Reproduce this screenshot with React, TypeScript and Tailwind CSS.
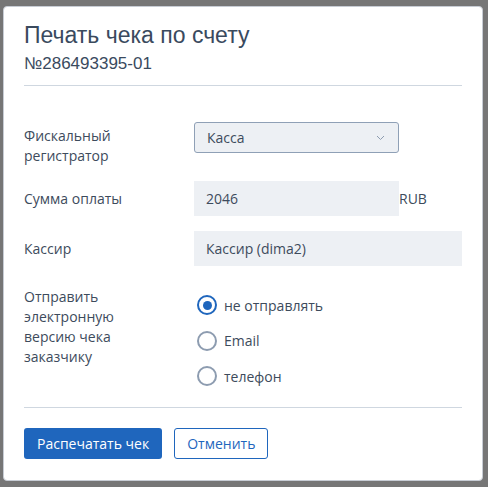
import { useState } from 'react';

const label = 'text-[14px] leading-[20px] text-[#3d4b5c]';
const body = { fontFamily: '"Open Sans", "Noto Sans", sans-serif' };

function Radio({ checked, text, onClick }: { checked: boolean; text: string; onClick: () => void }) {
  return (
    <div className="flex h-[20px] cursor-pointer items-center gap-[7px]" onClick={onClick}>
      <span
        className={`flex h-[20px] w-[20px] items-center justify-center rounded-full border-[2px] ${
          checked ? 'border-[#1f66bd]' : 'border-[#8d9cb0]'
        }`}
      >
        {checked && <span className="h-[9px] w-[9px] rounded-full bg-[#1f66bd]" />}
      </span>
      <span className="text-[14px] text-[#3d4b5c]">{text}</span>
    </div>
  );
}

export default function App() {
  const [send, setSend] = useState('none');

  return (
    <div className="h-[487px] w-[488px] bg-[#767676] pl-[3px] pt-[6px]">
      <div className="flex h-[475px] w-[480px] flex-col rounded-[4px] border border-[#c7ccd4] bg-white px-[20px]" style={body}>
        <div className="pt-[13px]" style={{ fontFamily: '"Liberation Sans", Arial, sans-serif' }}>
          <h1 className="text-[23px] leading-[30px] text-[#3a4a5e]">Печать чека по счету</h1>
          <div className="mt-[3px] text-[17px] leading-[22px] text-[#3a4a5e]">№286493395-01</div>
        </div>
        <div className="mt-[10px] h-px bg-[#cfd7e0]" />

        <div className="mt-[36px] grid grid-cols-[170px_1fr] gap-y-[15px]">
          <div className={`${label} mt-[4px]`}>Фискальный<br />регистратор</div>
          <div>
            <div className="flex h-[31px] w-[205px] items-center justify-between rounded-[3px] border border-[#8fa0b6] bg-[#edf0f4] pl-[12px] pr-[13px]">
              <span className="text-[14px] text-[#3d4b5c]">Касса</span>
              <svg width="9" height="6" viewBox="0 0 9 6" fill="none">
                <path d="M1 1l3.5 3.5L8 1" stroke="#8d9cb0" strokeWidth="1" />
              </svg>
            </div>
          </div>

          <div className={`${label} self-center`}>Сумма оплаты</div>
          <div className="flex items-center">
            <div className="flex h-[35px] w-[205px] items-center bg-[#edf0f4] pl-[12px] text-[14px] text-[#3d4b5c]">2046</div>
            <span className="text-[14px] text-[#3d4b5c]">RUB</span>
          </div>

          <div className={`${label} self-center`}>Кассир</div>
          <div className="flex h-[35px] w-[268px] items-center bg-[#edf0f4] pl-[12px] text-[14px] text-[#3d4b5c]">
            Кассир (dima2)
          </div>

          <div className={`${label} mt-[6px]`}>
            Отправить<br />электронную<br />версию чека<br />заказчику
          </div>
          <div className="mt-[14px] flex flex-col gap-[15.5px] pl-[3px]">
            <Radio checked={send === 'none'} text="не отправлять" onClick={() => setSend('none')} />
            <Radio checked={send === 'email'} text="Email" onClick={() => setSend('email')} />
            <Radio checked={send === 'phone'} text="телефон" onClick={() => setSend('phone')} />
          </div>
        </div>

        <div className="mt-[21px] h-px bg-[#cfd7e0]" />
        <div className="mt-[20px] flex gap-[12px]">
          <button className="h-[31px] rounded-[3px] bg-[#1f66bd] px-[13px] text-[14px] text-white">Распечатать чек</button>
          <button className="h-[31px] rounded-[3px] border border-[#1f66bd] px-[12px] text-[14px] text-[#1f66bd]">Отменить</button>
        </div>
      </div>
    </div>
  );
}
